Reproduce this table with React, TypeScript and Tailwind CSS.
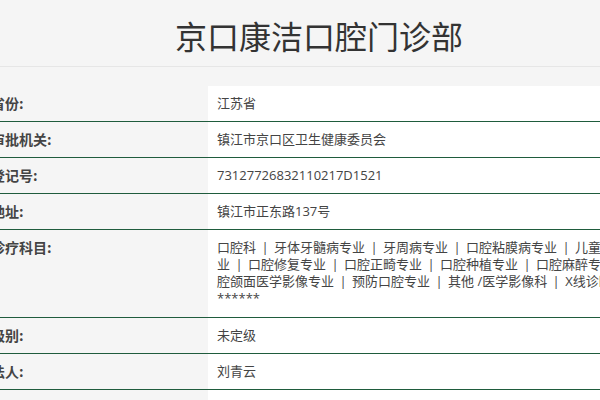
import React from "react";

const FONT = { fontFamily: '"Open Sans", "Noto Sans CJK SC", sans-serif' };

function Sep() {
  return <span className="inline-block w-[18px] text-center">|</span>;
}

function Row({ label, children, multi }: { label: string; children: React.ReactNode; multi?: boolean }) {
  return (
    <div className="flex border-b border-[#1f5c3d]">
      <div className="w-[208px] shrink-0 bg-[#f5f5f5] pt-[9px] pb-[9px] overflow-hidden">
        <div className="-ml-[9px] text-[14px] leading-[17px] font-bold text-[#444] whitespace-nowrap" style={{ fontFamily: '"Noto Sans CJK SC", sans-serif' }}>
          {label}
        </div>
      </div>
      <div className={`flex-1 bg-white pl-[9px] pt-[9px] ${multi ? "pb-[10px]" : "pb-[9px]"} text-[13px] leading-[17px] text-[#444] whitespace-nowrap overflow-hidden`}>
        {children}
      </div>
    </div>
  );
}

export default function App() {
  return (
    <div className="w-[600px] h-[400px] overflow-hidden bg-[#f5f5f5]" style={FONT}>
      <div className="h-[67px] border-b border-[#e6e6e6] flex items-center pl-[175px]">
        <h1 className="text-[32px] text-[#333] leading-none pt-[3px]" style={{ fontFamily: '"Noto Sans CJK SC", sans-serif' }}>
          京口康洁口腔门诊部
        </h1>
      </div>
      <div className="h-[19px]" />
      <Row label="省份:">江苏省</Row>
      <Row label="审批机关:">镇江市京口区卫生健康委员会</Row>
      <Row label="登记号:">73127726832110217D1521</Row>
      <Row label="地址:">镇江市正东路137号</Row>
      <Row label="诊疗科目:" multi>
        <div>
          口腔科<Sep />牙体牙髓病专业<Sep />牙周病专业<Sep />口腔粘膜病专业<Sep />儿童口腔专
        </div>
        <div>
          业<Sep />口腔修复专业<Sep />口腔正畸专业<Sep />口腔种植专业<Sep />口腔麻醉专业<Sep />口
        </div>
        <div>
          腔颌面医学影像专业<Sep />预防口腔专业<Sep />其他 /医学影像科<Sep />X线诊断专业
        </div>
        <div>******</div>
      </Row>
      <Row label="级别:">未定级</Row>
      <Row label="法人:">刘青云</Row>
      <Row label="类别:">口腔门诊部</Row>
    </div>
  );
}
